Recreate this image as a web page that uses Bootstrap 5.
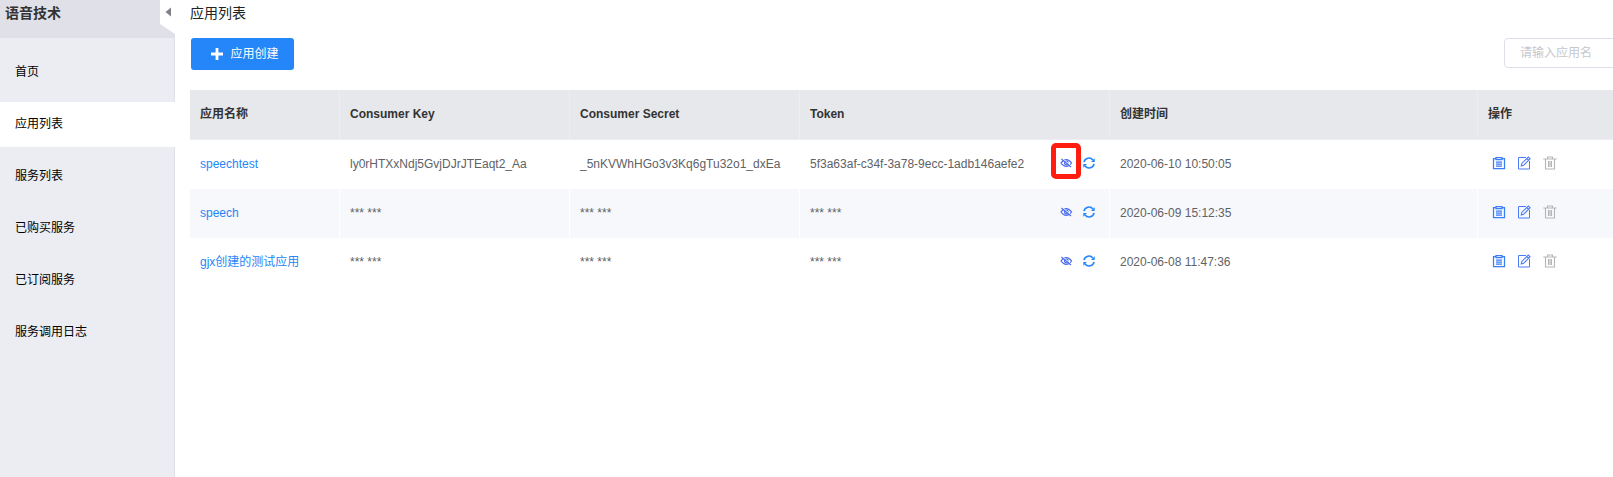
<!DOCTYPE html>
<html lang="zh-CN">
<head>
<meta charset="utf-8">
<title>应用列表</title>
<link rel="stylesheet" href="https://cdn.jsdelivr.net/npm/bootstrap@5.3.0/dist/css/bootstrap.min.css">
<style>
body{font:12px/20px "Liberation Sans","Noto Sans CJK SC",sans-serif;color:#606266;background:#fff}
.side{width:175px;background:#ebedf2;border-right:1px solid #dfe0e8}
.side-head{height:38px;width:175px;background:#dfe0e8;color:#333;font-size:14px;font-weight:600;line-height:26px;padding-left:5px;margin-bottom:12px}
.side-head svg{right:0;top:0}
.side .nav{gap:7px}
.side .nav-link{height:45px;line-height:45px;padding:0 0 0 15px;color:#000;border-radius:0;font-size:12px}
.side .nav-link.active{background:#fff;color:#000;width:175px}
.main{padding-left:15px}
.main-title{font-size:14px;line-height:26px;height:38px;color:#222;margin:0;font-weight:400}
.create{width:103px;height:32px;margin-left:1px;background:#2486f8;color:#fff;font-size:12px;border:0;border-radius:3px;padding:0 0 0 5px}
.create:hover{background:#2486f8}
.create svg{margin-right:7px}
.toolbar{height:52px;width:1523px}
.search{width:209px;height:30px;border:1px solid #dcdfe6;border-radius:4px;font-size:12px;padding:0 15px 1px}
.search::placeholder{color:#c5c7cd}
.apps{table-layout:fixed;width:1500px;margin:0;color:#606266;border-collapse:separate;border-spacing:0}
.apps>:not(caption)>*>*{height:49px;padding:0 10px 2px;border:0;border-right:1px solid #fff;background:transparent;box-shadow:none;vertical-align:middle;color:inherit}
.apps>thead>tr>th{height:50px;padding-bottom:1px;background:#e6e8ec;color:#333;border-right-color:#eceef2;border-bottom:1px solid #ebeef5}
.apps>tbody>tr:nth-child(2)>td{background:#f6f8fc}
.apps a{color:#2486f8;text-decoration:none}
.tools{margin:-2px 4px 0 0;gap:10px}
.spot{width:30px;height:36px;border:5px solid #ff1d10;border-radius:5px;left:-9px;top:-14px}
.ops{gap:11px;padding-left:4px;margin-top:-1px}
.ops svg:last-child{margin-left:1px}
svg{display:block;flex:none}
</style>
<script src="https://cdn.jsdelivr.net/npm/bootstrap@5.3.0/dist/js/bootstrap.bundle.min.js"></script>
</head>
<body class="vh-100 overflow-hidden">
<svg width="0" height="0" class="position-absolute">
<defs>
<symbol id="eye" viewBox="0 0 13 12"><g fill="none" stroke="#4a6bf0" stroke-width="1.2"><path d="M1 6Q3.4 2.6 6.3 2.6T11.6 6Q9.2 9.4 6.3 9.4T1 6Z"/><circle cx="6.3" cy="6" r="1.8"/></g><path d="M2.3 1.5l9 7.6" stroke="#fff" stroke-width="1"/><path d="M1.4 2l9.6 8" stroke="#4a6bf0" stroke-width="1.1"/></symbol>
<symbol id="sync" viewBox="0 0 12 12"><path d="M1 5.2A5 5 0 0 1 9.9 3M11 6.8A5 5 0 0 1 2.1 9" fill="none" stroke="#2486f8" stroke-width="1.6"/><path d="M11.7 1.2v3.7H8zM.3 10.8V7.1H4z" fill="#2486f8"/></symbol>
<symbol id="note" viewBox="0 0 14 14"><path d="M3.5 2.5h-2v10h11v-10h-2M4 1.5h6v2H4zM4 6h6M4 8h6M4 10h6" fill="none" stroke="#3a7df5" stroke-width="1.25"/></symbol>
<symbol id="edit" viewBox="0 0 14 14"><path d="M9 1.5H1.5v11.5h11V5" fill="none" stroke="#4c7cf6"/><path d="M4.3 9.9l.5-2.5L11.3 1l1.8 1.8-6.5 6.5zM9.8 2.5l1.8 1.8" fill="none" stroke="#4c7cf6" stroke-width="1.1"/></symbol>
<symbol id="trash" viewBox="0 0 14 14"><path d="M.3 3h13.4M4.5 3V1h5v2M2.5 3v10h9V3M5.5 5v6M7 5v6M8.5 5v6" fill="none" stroke="#b5b5b9" stroke-width="1.1"/></symbol>
</defs></svg>
<div class="d-flex h-100">
<aside class="side flex-shrink-0 h-100">
<div class="side-head position-relative">语音技术
<svg class="position-absolute" width="15" height="38"><path d="M0 0h15v34L0 24z" fill="#fff"/><path d="M5.5 12l5.5-4.5v9z" fill="#808188"/></svg></div>
<nav class="nav flex-column">
<a class="nav-link" href="#">首页</a>
<a class="nav-link active" href="#">应用列表</a>
<a class="nav-link" href="#">服务列表</a>
<a class="nav-link" href="#">已购买服务</a>
<a class="nav-link" href="#">已订阅服务</a>
<a class="nav-link" href="#">服务调用日志</a>
</nav>
</aside>
<main class="main flex-grow-1 overflow-hidden">
<h1 class="main-title">应用列表</h1>
<div class="toolbar d-flex justify-content-between align-items-start">
<button class="btn create d-flex align-items-center justify-content-center"><svg width="12" height="12"><path d="M6 0v12M0 6h12" stroke="#fff" stroke-width="2.8"/></svg>应用创建</button>
<input class="form-control search" placeholder="请输入应用名">
</div>
<table class="table apps">
<colgroup><col style="width:150px"><col style="width:230px"><col style="width:230px"><col style="width:310px"><col style="width:368px"><col></colgroup>
<thead><tr><th>应用名称</th><th>Consumer Key</th><th>Consumer Secret</th><th>Token</th><th>创建时间</th><th>操作</th></tr></thead>
<tbody>
<tr><td><a href="#">speechtest</a></td><td>ly0rHTXxNdj5GvjDJrJTEaqt2_Aa</td><td>_5nKVWhHGo3v3Kq6gTu32o1_dxEa</td>
<td><div class="d-flex align-items-center justify-content-between">5f3a63af-c34f-3a78-9ecc-1adb146aefe2<div class="tools d-flex position-relative"><svg width="13" height="12"><use href="#eye"/></svg><svg width="12" height="12"><use href="#sync"/></svg><span class="spot position-absolute"></span></div></div></td>
<td>2020-06-10 10:50:05</td><td><div class="ops d-flex"><svg width="14" height="14"><use href="#note"/></svg><svg width="14" height="14"><use href="#edit"/></svg><svg width="14" height="14"><use href="#trash"/></svg></div></td></tr>
<tr><td><a href="#">speech</a></td><td>*** ***</td><td>*** ***</td>
<td><div class="d-flex align-items-center justify-content-between">*** ***<div class="tools d-flex"><svg width="13" height="12"><use href="#eye"/></svg><svg width="12" height="12"><use href="#sync"/></svg></div></div></td>
<td>2020-06-09 15:12:35</td><td><div class="ops d-flex"><svg width="14" height="14"><use href="#note"/></svg><svg width="14" height="14"><use href="#edit"/></svg><svg width="14" height="14"><use href="#trash"/></svg></div></td></tr>
<tr><td><a href="#">gjx创建的测试应用</a></td><td>*** ***</td><td>*** ***</td>
<td><div class="d-flex align-items-center justify-content-between">*** ***<div class="tools d-flex"><svg width="13" height="12"><use href="#eye"/></svg><svg width="12" height="12"><use href="#sync"/></svg></div></div></td>
<td>2020-06-08 11:47:36</td><td><div class="ops d-flex"><svg width="14" height="14"><use href="#note"/></svg><svg width="14" height="14"><use href="#edit"/></svg><svg width="14" height="14"><use href="#trash"/></svg></div></td></tr>
</tbody></table>
</main>
</div>
</body>
</html>
